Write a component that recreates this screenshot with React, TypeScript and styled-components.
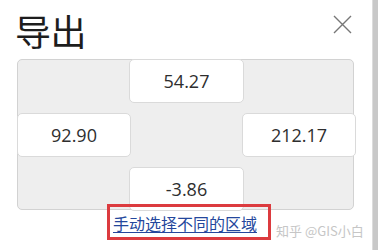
import React from "react"
import styled, { createGlobalStyle } from "styled-components"

const GlobalStyle = createGlobalStyle`
  html, body {
    margin: 0;
    padding: 0;
    background: #ffffff;
  }
  body {
    font-family: "Noto Sans", "Noto Sans CJK SC", sans-serif;
  }
`

const Frame = styled.div`
  position: relative;
  width: 378px;
  height: 250px;
  overflow: hidden;
  display: flex;
`

const Dialog = styled.div`
  flex: 1;
  padding: 8px 0 0 17px;
  box-sizing: border-box;
`

const Scrollbar = styled.div`
  width: 5px;
  background: #c8c8c8;
  border-left: 1px solid #dcdcdc;
`

const Header = styled.div`
  display: flex;
  align-items: flex-start;
  justify-content: space-between;
  width: 337px;
  height: 51px;
`

const Title = styled.h1`
  margin: 0 0 0 -2px;
  font-family: "Noto Sans CJK SC", sans-serif;
  font-weight: 400;
  font-size: 36px;
  line-height: 44px;
  color: #1d1d1d;
  letter-spacing: -0.5px;
`

const CloseButton = styled.button`
  border: none;
  background: none;
  padding: 0;
  margin: 6px 2px 0 0;
  width: 20px;
  height: 20px;
  display: flex;
  align-items: center;
  justify-content: center;
  cursor: pointer;
`

const Panel = styled.div`
  width: 337px;
  height: 151px;
  box-sizing: border-box;
  display: grid;
  grid-template-columns: 112px 113px 112px;
  grid-template-rows: repeat(3, 42px);
  row-gap: 12px;
  background: #eeeeee;
  border: 1px solid #d2d2d2;
  border-radius: 5px;
`

const Cell = styled.div<{ $col: number; $row: number }>`
  grid-column: ${({ $col }) => $col};
  grid-row: ${({ $row }) => $row};
  margin: -1px;
  background: #ffffff;
  border: 1px solid #dadada;
  border-radius: 5px;
  display: flex;
  align-items: center;
  justify-content: center;
  font-family: "Open Sans", sans-serif;
  font-size: 18px;
  color: #2e2e2e;
`

const LinkRow = styled.div`
  width: 337px;
  display: flex;
  justify-content: center;
  padding-top: 2px;
`

const Link = styled.a`
  font-family: "Noto Sans CJK SC", sans-serif;
  font-size: 16px;
  line-height: 22px;
  color: #24479c;
  text-decoration: underline;
  text-underline-offset: 2px;
  margin-left: -1px;
`

const Highlight = styled.div`
  position: absolute;
  left: 107px;
  top: 204px;
  width: 164px;
  height: 36px;
  box-sizing: border-box;
  border: 3px solid #dc3b3f;
  pointer-events: none;
`

const Watermark = styled.div`
  position: absolute;
  left: 276px;
  top: 222px;
  font-family: "Noto Sans CJK SC", sans-serif;
  font-size: 13px;
  line-height: 18px;
  color: #c6c6c6;
  white-space: nowrap;
`

const values = [
  { v: "54.27", col: 2, row: 1 },
  { v: "92.90", col: 1, row: 2 },
  { v: "212.17", col: 3, row: 2 },
  { v: "-3.86", col: 2, row: 3 },
]

const App = () => {
  return (
    <>
      <GlobalStyle />
      <Frame>
        <Dialog>
          <Header>
            <Title>导出</Title>
            <CloseButton aria-label="关闭">
              <svg width="19" height="19" viewBox="0 0 19 19">
                <path d="M1 1 L18 18 M18 1 L1 18" stroke="#777" strokeWidth="1.4" fill="none" />
              </svg>
            </CloseButton>
          </Header>
          <Panel>
            {values.map(item => (
              <Cell key={item.v} $col={item.col} $row={item.row}>
                {item.v}
              </Cell>
            ))}
          </Panel>
          <LinkRow>
            <Link href="#">手动选择不同的区域</Link>
          </LinkRow>
        </Dialog>
        <Scrollbar />
        <Highlight />
        <Watermark>知乎 @GIS小白</Watermark>
      </Frame>
    </>
  )
}

export default App
